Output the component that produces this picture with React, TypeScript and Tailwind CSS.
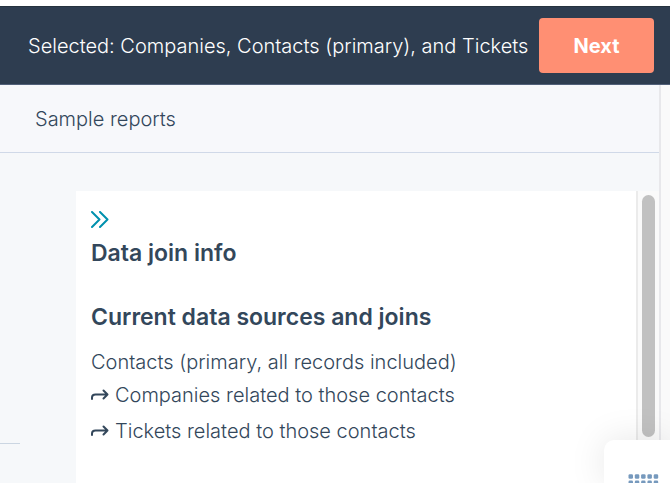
import React from "react";

function JoinArrow() {
  return (
    <svg width="18" height="14" viewBox="0 0 18 14" fill="none" stroke="#33475b" strokeWidth="2" strokeLinecap="round" strokeLinejoin="round" aria-hidden="true">
      <path d="M1 11V9.500Q1 6.500 4.500 6.500H16.500M12.500 2.500L16.500 6.500L12.500 10.500" />
    </svg>
  );
}

const joins = [
  "Companies related to those contacts",
  "Tickets related to those contacts",
];

const dots = Array.from({ length: 15 }, (_, i) => i);

export default function App() {
  return (
    <div className="relative flex h-screen flex-col overflow-hidden bg-white pt-[6px] font-['Inter',sans-serif] text-[20px] font-light text-[#33475b]">
      <header className="flex h-[79px] shrink-0 items-center justify-end gap-4 border-y border-t-[#26333f] border-b-[#516079] bg-[#2e3d50] pr-4 pl-7">
        <p className="min-w-0 flex-1 whitespace-nowrap leading-6 text-white">
          Selected: Companies, Contacts (primary), and Tickets
        </p>
        <button type="button" className="h-[55px] w-[115px] shrink-0 rounded bg-[#ff8f73] text-[20px] font-bold text-white">
          Next
        </button>
      </header>

      <div className="flex min-h-0 flex-1 bg-[#fafafa]">
        <div className="flex min-w-0 flex-1 flex-col border-r-2 border-[#e8e8eb] bg-[#f6f8fa]">
          <div className="flex h-[68px] shrink-0 items-center border-b border-[#d0d9e8] bg-[#f7f8fb] pl-[35px]">
            <h1 className="leading-6 font-light">Sample reports</h1>
          </div>

          <div className="flex min-h-0 flex-1 pt-[38px]">
            <div className="flex w-[76px] shrink-0 flex-col pt-[252px]">
              <hr className="w-5 border-[#cbd6e2]" />
            </div>
            <main className="min-w-0 flex-1 bg-white px-[15px] pt-5">
              <button type="button" aria-label="Collapse panel" className="block">
                <svg width="18" height="18" viewBox="0 0 18 18" fill="none" stroke="#0091ae" strokeWidth="2" strokeLinecap="round" strokeLinejoin="round" aria-hidden="true">
                  <path d="M1 1L8.500 8.500L1 16M9 1L16.500 8.500L9 16" />
                </svg>
              </button>
              <h2 className="mt-2.5 text-[23px] leading-7 font-semibold">Data join info</h2>
              <h3 className="mt-9 text-[23px] leading-7 font-semibold">Current data sources and joins</h3>
              <p className="mt-[19px] leading-6 whitespace-nowrap">Contacts (primary, all records included)</p>
              <ul className="mt-[9px] flex flex-col gap-3">
                {joins.map((join) => (
                  <li key={join} className="flex items-center gap-1.5 leading-6 whitespace-nowrap">
                    <JoinArrow />
                    {join}
                  </li>
                ))}
              </ul>
            </main>
            <div className="flex w-[23px] shrink-0 justify-center border-l-2 border-[#ebebeb] bg-[#fafafa] pt-1">
              <div className="h-[242px] w-[13px] rounded-full bg-[#c1c1c1]" />
            </div>
          </div>
        </div>
        <div className="w-[9px] shrink-0" />
      </div>

      <div className="absolute right-0 bottom-0 h-[43px] w-[66px] overflow-hidden rounded-tl-[10px] bg-white pt-[34px] pl-6 shadow-[0_0_36px_rgba(0,0,0,0.1)]">
        <svg width="31" height="18" viewBox="0 0 31 18" fill="#7699bd" aria-hidden="true">
          {dots.map((i) => (
            <rect key={i} x={0.5 + (i % 5) * 6.3} y={0.3 + Math.floor(i / 5) * 6.3} width="4.500" height="4.500" rx="1.300" />
          ))}
        </svg>
      </div>
    </div>
  );
}
